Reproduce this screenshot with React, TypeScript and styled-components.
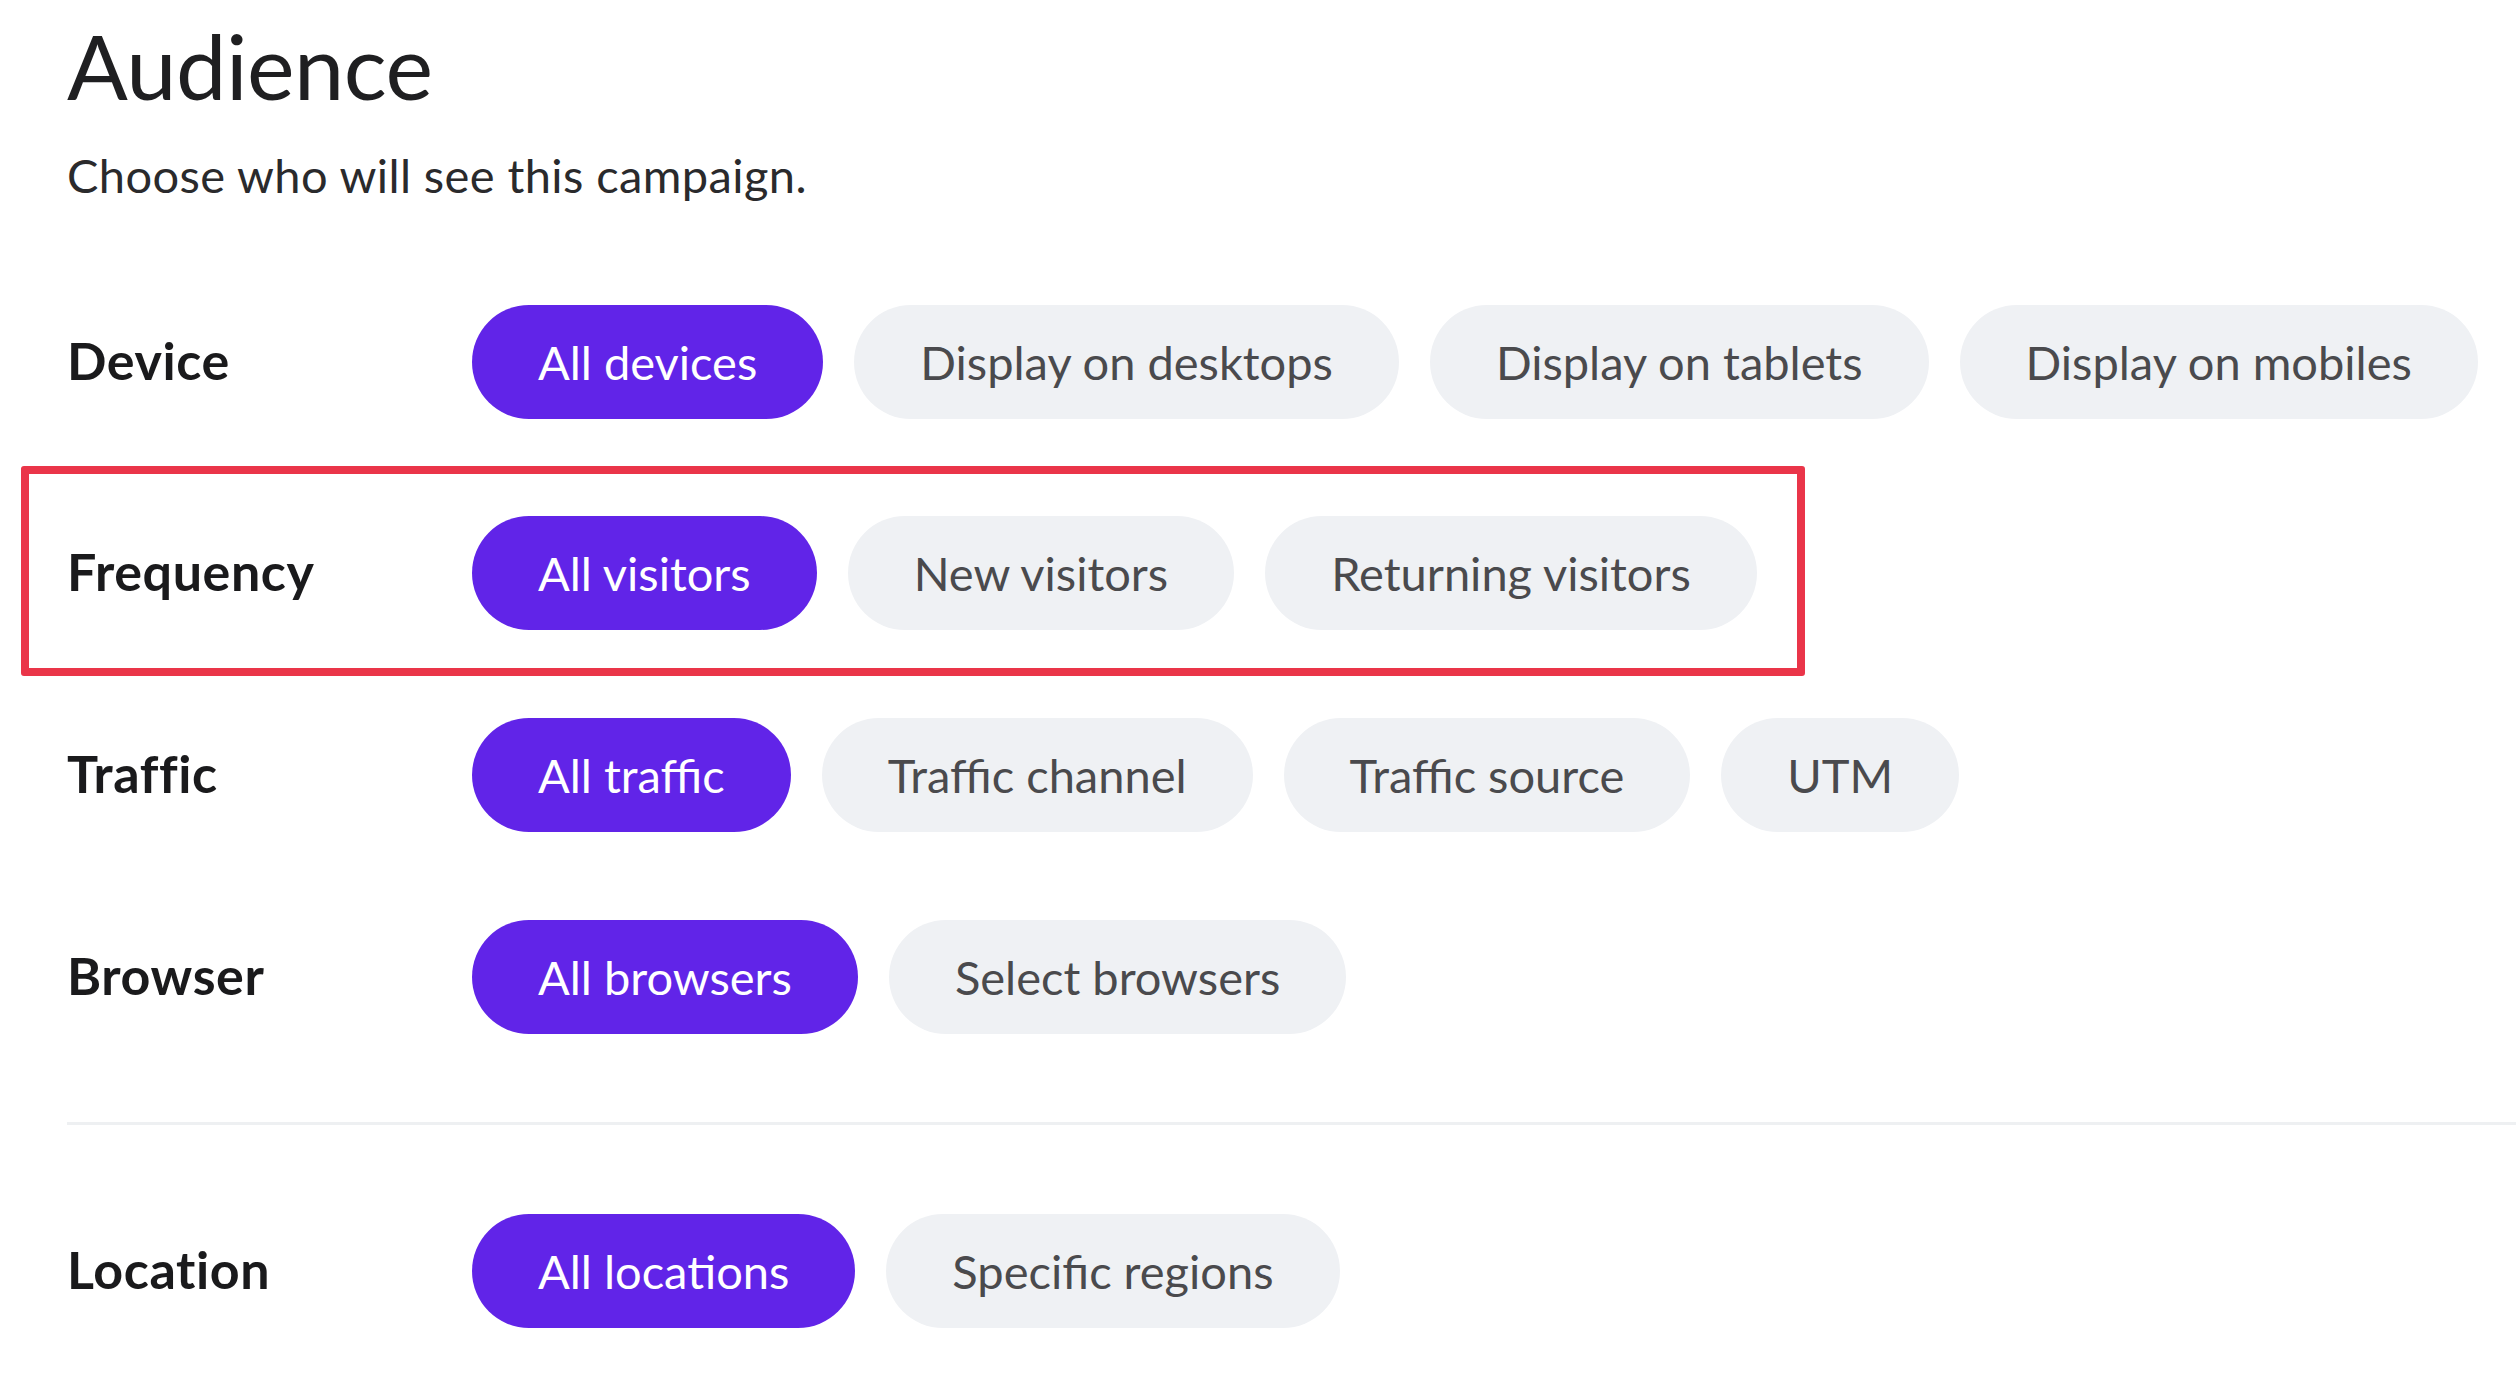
import styled, { createGlobalStyle } from "styled-components";

const GlobalStyle = createGlobalStyle`
  html, body {
    margin: 0;
    padding: 0;
    background: #ffffff;
  }
  body {
    font-family: "Lato", "Noto Sans", sans-serif;
    color: #1c1c1e;
  }
`;

interface Option {
  label: string;
  active?: boolean;
}

interface Group {
  title: string;
  options: Option[];
  highlighted?: boolean;
}

const groups: Group[] = [
  {
    title: "Device",
    options: [
      { label: "All devices", active: true },
      { label: "Display on desktops" },
      { label: "Display on tablets" },
      { label: "Display on mobiles" },
    ],
  },
  {
    title: "Frequency",
    highlighted: true,
    options: [
      { label: "All visitors", active: true },
      { label: "New visitors" },
      { label: "Returning visitors" },
    ],
  },
  {
    title: "Traffic",
    options: [
      { label: "All traffic", active: true },
      { label: "Traffic channel" },
      { label: "Traffic source" },
      { label: "UTM" },
    ],
  },
  {
    title: "Browser",
    options: [
      { label: "All browsers", active: true },
      { label: "Select browsers" },
    ],
  },
];

const location: Group = {
  title: "Location",
  options: [
    { label: "All locations", active: true },
    { label: "Specific regions" },
  ],
};

export default function App() {
  return (
    <>
      <GlobalStyle />
      <Page>
        <Title>Audience</Title>
        <Subtitle>Choose who will see this campaign.</Subtitle>
        <Rows>
          {groups.map((g) => (
            <FilterRow key={g.title} group={g} />
          ))}
        </Rows>
        <Divider />
        <FilterRow group={location} />
      </Page>
    </>
  );
}

function FilterRow({ group }: { group: Group }) {
  return (
    <Row $highlighted={group.highlighted}>
      <Label>{group.title}</Label>
      <Pills>
        {group.options.map((o) => (
          <Pill key={o.label} $active={o.active}>
            {o.label}
          </Pill>
        ))}
      </Pills>
    </Row>
  );
}

const Page = styled.div`
  padding: 11px 0 0 67px;
  overflow: hidden;
  min-height: 100vh;
  box-sizing: border-box;
`;

const Title = styled.h1`
  margin: 0;
  font-size: 90px;
  line-height: 108px;
  font-weight: 400;
  color: #1f1f21;
  letter-spacing: -0.5px;
`;

const Subtitle = styled.p`
  margin: 29px 0 0;
  font-size: 47px;
  line-height: 55px;
  font-weight: 400;
  color: #2a2a2c;
  letter-spacing: 0.4px;
`;

const Rows = styled.div`
  display: flex;
  flex-direction: column;
  gap: 88px;
  margin-top: 102px;

  & > :first-child {
    margin-bottom: 9px;
  }
`;

const Row = styled.div<{ $highlighted?: boolean }>`
  position: relative;
  display: grid;
  grid-template-columns: 405px 1fr;
  align-items: center;
  height: 114px;

  ${(p) =>
    p.$highlighted &&
    `
    &::after {
      content: "";
      position: absolute;
      left: -46px;
      top: -50px;
      width: 1784px;
      height: 210px;
      box-sizing: border-box;
      border: 8px solid #ea3549;
      border-radius: 3px;
      pointer-events: none;
    }
  `}
`;

const Label = styled.div`
  font-size: 52px;
  font-weight: 700;
  color: #1a1a1c;
  letter-spacing: 0.6px;
  margin-top: -4px;
`;

const Pills = styled.div`
  display: flex;
  gap: 31px;
`;

const Pill = styled.button<{ $active?: boolean }>`
  display: inline-flex;
  align-items: center;
  height: 114px;
  padding: 0 66px;
  border: none;
  border-radius: 57px;
  font-family: "Lato", "Noto Sans", sans-serif;
  font-size: 47px;
  font-weight: 400;
  white-space: nowrap;
  background: ${(p) => (p.$active ? "#6124e8" : "#eff1f4")};
  color: ${(p) => (p.$active ? "#ffffff" : "#4a4a4d")};
`;

const Divider = styled.div`
  height: 3px;
  background: #eef0f2;
  margin: 88px 0 89px;
`;
